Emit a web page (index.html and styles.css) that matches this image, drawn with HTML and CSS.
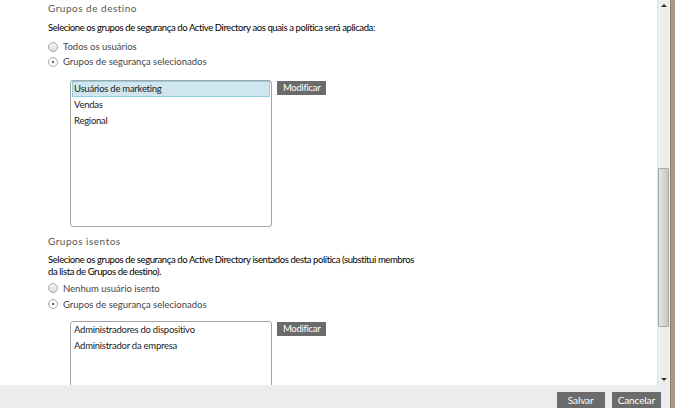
FILE: index.html
```html
<!DOCTYPE html>
<html lang="pt">
<head>
<meta charset="utf-8">
<link rel="stylesheet" href="styles.css">
</head>
<body>
<div class="app">
  <div class="main">
    <div class="content">
      <section class="group">
        <h2 class="title">Grupos de destino</h2>
        <p class="desc">Selecione os grupos de segurança do Active Directory aos quais a política será aplicada:</p>
        <label class="radio first"><span class="dot"></span>Todos os usuários</label>
        <label class="radio"><span class="dot on"></span>Grupos de segurança selecionados</label>
        <div class="picker">
          <ul class="list tall">
            <li class="sel">Usuários de marketing</li>
            <li>Vendas</li>
            <li>Regional</li>
          </ul>
          <button class="btn">Modificar</button>
        </div>
      </section>
      <section class="group second">
        <h2 class="title">Grupos isentos</h2>
        <p class="desc wrap">Selecione os grupos de segurança do Active Directory isentados desta política (substitui membros da lista de Grupos de destino).</p>
        <label class="radio tall"><span class="dot"></span>Nenhum usuário isento</label>
        <label class="radio tall"><span class="dot on"></span>Grupos de segurança selecionados</label>
        <div class="picker low">
          <ul class="list">
            <li>Administradores do dispositivo</li>
            <li>Administrador da empresa</li>
          </ul>
          <button class="btn">Modificar</button>
        </div>
      </section>
    </div>
    <div class="scrollbar">
      <div class="arrow up"></div>
      <div class="track"><div class="thumb"></div></div>
      <div class="arrow down"></div>
    </div>
  </div>
  <div class="footer">
    <button class="btn big">Salvar</button>
    <button class="btn big">Cancelar</button>
  </div>
  <div class="edge"></div>
</div>
</body>
</html>
```
FILE: styles.css
```css
* { box-sizing: border-box; }
html, body { margin: 0; padding: 0; }
body {
  font-family: Lato, "Noto Sans", sans-serif;
  font-size: 9.5px;
  color: #222;
  background: #fff;
  width: 675px;
  height: 408px;
  overflow: hidden;
}
.app {
  position: relative;
  width: 675px;
  height: 408px;
  display: flex;
  flex-direction: column;
  padding-right: 5px;
}
.edge {
  position: absolute;
  right: 0; top: 0;
  width: 5px; height: 408px;
  background: #a8998a;
  border-left: 1px solid #8f8070;
}
.main {
  flex: 1;
  display: flex;
  min-height: 0;
}
.content {
  flex: 1;
  overflow: hidden;
  padding: 2px 0 0 48px;
  background: #fff;
}
.group { margin: 0; }
.title {
  margin: 0;
  font-size: 10px;
  font-weight: normal;
  color: #555;
  letter-spacing: 0.5px;
  line-height: 13px;
}
.desc {
  margin: 7px 0 3px;
  width: 400px;
  line-height: 12px;
  color: #000;
  letter-spacing: -0.4px;
}
.desc.wrap { width: 375px; margin-top: 6px; margin-bottom: 2px; }
.radio {
  display: flex;
  align-items: center;
  height: 15px;
  color: #444;
}
.radio.first { margin-top: 5px; }
.radio.tall { height: 16px; }
.dot {
  width: 10px; height: 10px;
  border-radius: 50%;
  border: 1px solid #a8a8a8;
  background: linear-gradient(#f4f4f4, #dcdcdc);
  margin-right: 5px;
  position: relative;
}
.dot.on { background: #fff; }
.dot.on::after {
  content: "";
  position: absolute;
  left: 3px; top: 3px;
  width: 2px; height: 2px;
  border-radius: 50%;
  background: #333;
}
.picker {
  display: flex;
  align-items: flex-start;
  margin: 11px 0 0 22px;
}
.picker.low { margin-top: 9px; }
.list {
  list-style: none;
  margin: 0;
  padding: 0 1px;
  width: 202px;
  height: 100px;
  border: 1px solid #a4a4a4;
  border-radius: 3px;
  background: #fff;
  letter-spacing: -0.25px;
}
.list.tall { height: 147px; }
.list li {
  height: 16px;
  line-height: 14px;
  padding: 0 1px;
  border: 1px solid transparent;
  color: #222;
}
.list li.sel {
  background: #cfe6ee;
  border-color: #8fcfe2;
}
.btn {
  font-family: inherit;
  font-size: 9.5px;
  color: #fff;
  background: #6b6b6b;
  border: 0;
  border-radius: 0;
  height: 14px;
  line-height: 14px;
  padding: 0 6px;
  margin: 1px 0 0 5px;
  letter-spacing: -0.3px;
}
.second { margin-top: 8px; }
.scrollbar {
  width: 13px;
  background: #eeeeee;
  border-left: 1px solid #e0e0e0;
  display: flex;
  flex-direction: column;
}
.arrow { height: 14px; position: relative; }
.arrow::after {
  content: "";
  position: absolute;
  left: 3px;
  border-left: 3px solid transparent;
  border-right: 3px solid transparent;
}
.arrow.up::after { top: 4px; border-bottom: 3px solid #333; }
.arrow.down::after { bottom: 4px; border-top: 3px solid #333; }
.track { flex: 1; padding-top: 154px; }
.thumb {
  height: 159px;
  width: 11px;
  border: 1px solid #a9a9a9;
  border-radius: 1px;
  background: linear-gradient(90deg, #e4e4e4, #d6d6d6 50%, #c6c6c6);
}
.footer {
  height: 23px;
  background: #ededf0;
  display: flex;
  justify-content: flex-end;
  align-items: flex-end;
  gap: 7px;
  padding-right: 9px;
}
.btn.big {
  height: 16px;
  line-height: 16px;
  margin: 0;
  font-size: 10px;
  padding: 0 6px;
  min-width: 48px;
  letter-spacing: -0.1px;
}
```
